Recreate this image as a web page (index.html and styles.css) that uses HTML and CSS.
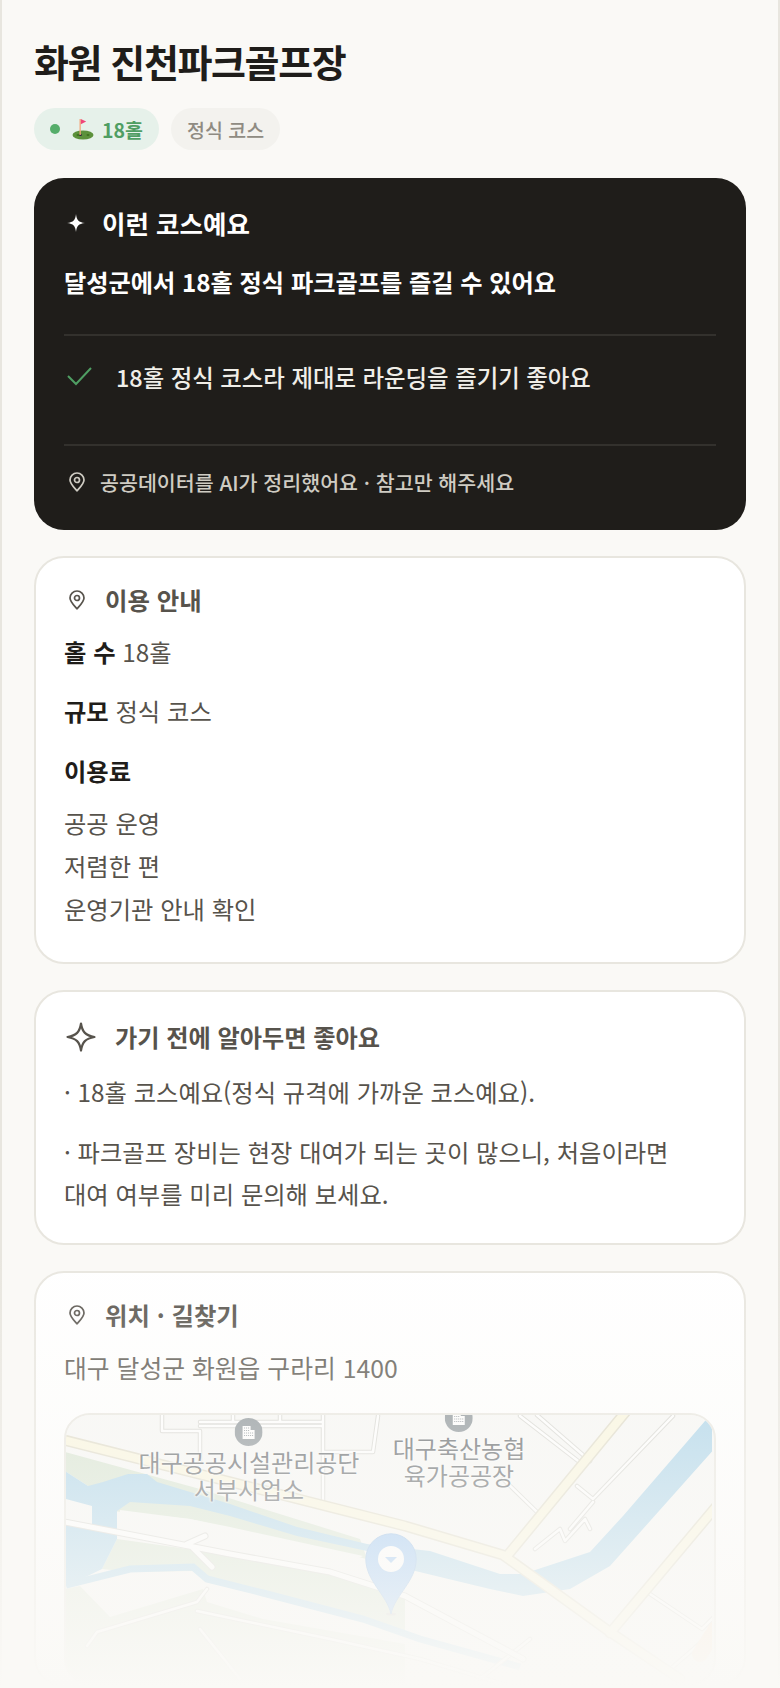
FILE: index.html
```html
<!DOCTYPE html>
<html lang="ko">
<head>
    <meta charset="UTF-8">
    <meta name="viewport" content="width=device-width, initial-scale=1.0">
    <title>화원 진천파크골프장</title>
    <link rel="stylesheet" href="styles.css">
</head>
<body>
    <div class="page">
        <h1 class="title">화원 진천파크골프장</h1>
        <div class="badges">
            <span class="badge badge-green"><i class="dot"></i><span class="emoji">
                <svg width="22" height="22" viewBox="0 0 22 22">
                    <ellipse cx="11" cy="17" rx="10.5" ry="4.500" fill="#5c913b"/>
                    <ellipse cx="6" cy="17" rx="1.500" ry="1" fill="#3e721d"/>
                    <ellipse cx="16" cy="17" rx="1.500" ry="1" fill="#3e721d"/>
                    <ellipse cx="8.500" cy="17" rx="1.400" ry="1" fill="#2c2440"/>
                    <rect x="7.500" y="1" width="1.300" height="16" fill="#f4a77a"/>
                    <path d="M8.800 1l5.400 2.600-5.400 2.600z" fill="#f0457a"/>
                </svg>
            </span>18홀</span>
            <span class="badge badge-gray">정식 코스</span>
        </div>

        <section class="hero">
            <div class="hero-head">
                <svg class="icon-spark" width="18" height="18" viewBox="0 0 18 18"><path d="M9 0c.6 6 2.500 8.200 9 9-6.500.8-8.400 3-9 9-.6-6-2.500-8.200-9-9 6.500-.8 8.400-3 9-9z" fill="#fff"/></svg>
                <span>이런 코스예요</span>
            </div>
            <p class="hero-lead">달성군에서 18홀 정식 파크골프를 즐길 수 있어요</p>
            <div class="hero-point">
                <svg width="28" height="22" viewBox="0 0 28 22"><path d="M4 10l8 8L27 2" fill="none" stroke="#4f9e63" stroke-width="2"/></svg>
                <span>18홀 정식 코스라 제대로 라운딩을 즐기기 좋아요</span>
            </div>
            <div class="hero-foot">
                <svg class="pin" width="18" height="20" viewBox="0 0 18 20"><path d="M9 18.800c-3.800-4.300-7-7.300-7-10.800a7 7 0 0 1 14 0c0 3.500-3.200 6.500-7 10.800z" fill="none" stroke="currentColor" stroke-width="1.700"/><circle cx="9" cy="8" r="2.500" fill="none" stroke="currentColor" stroke-width="1.700"/></svg>
                <span>공공데이터를 AI가 정리했어요 · 참고만 해주세요</span>
            </div>
        </section>

        <section class="card">
            <div class="card-head">
                <svg class="pin" width="18" height="20" viewBox="0 0 18 20"><path d="M9 18.800c-3.800-4.300-7-7.300-7-10.800a7 7 0 0 1 14 0c0 3.500-3.200 6.500-7 10.800z" fill="none" stroke="currentColor" stroke-width="1.700"/><circle cx="9" cy="8" r="2.500" fill="none" stroke="currentColor" stroke-width="1.700"/></svg>
                <span>이용 안내</span>
            </div>
            <p class="info-row"><b>홀 수</b> 18홀</p>
            <p class="info-row"><b>규모</b> 정식 코스</p>
            <p class="info-row"><b>이용료</b></p>
            <p class="info-lines">공공 운영<br>저렴한 편<br>운영기관 안내 확인</p>
        </section>

        <section class="card">
            <div class="card-head card-head-tips">
                <svg width="30" height="30" viewBox="0 0 30 30"><path d="M15 1.500c1.300 8.500 4.500 12 13.500 13.500-9 1.500-12.200 5-13.500 13.500-1.300-8.500-4.500-12-13.500-13.500 9-1.500 12.200-5 13.500-13.500z" fill="none" stroke="currentColor" stroke-width="2.200" stroke-linejoin="round"/></svg>
                <span>가기 전에 알아두면 좋아요</span>
            </div>
            <p class="tip">· 18홀 코스예요(정식 규격에 가까운 코스예요).</p>
            <p class="tip tip-next">· 파크골프 장비는 현장 대여가 되는 곳이 많으니, 처음이라면<br>대여 여부를 미리 문의해 보세요.</p>
        </section>

        <section class="card card-map">
            <div class="card-head">
                <svg class="pin" width="18" height="20" viewBox="0 0 18 20"><path d="M9 18.800c-3.800-4.300-7-7.300-7-10.800a7 7 0 0 1 14 0c0 3.500-3.200 6.500-7 10.800z" fill="none" stroke="currentColor" stroke-width="1.700"/><circle cx="9" cy="8" r="2.500" fill="none" stroke="currentColor" stroke-width="1.700"/></svg>
                <span>위치 · 길찾기</span>
            </div>
            <p class="address">대구 달성군 화원읍 구라리 1400</p>
            <div class="map">
                <svg class="map-art" width="646" height="270" viewBox="66 1416 646 270">
                    <rect x="66" y="1416" width="646" height="270" fill="#f7f7f5"/>
                    <!-- 녹지 -->
                    <path d="M65 1453L200 1490 360 1540 367 1560 190 1520 112 1512 112 1497 88 1487 65 1472z" fill="#d5e3cf"/>
                    <path d="M102 1570L117 1540 230 1556 330 1573 405 1597 405 1637 363 1623 263 1597 207 1583 193 1572 130 1573z" fill="#d5e3cf"/>
                    <path d="M65 1590L80 1587 110 1618 203 1590 207 1603 263 1620 405 1645 405 1690 65 1690z" fill="#dfe8d8"/>
                    <!-- 강 -->
                    <path d="M65 1472L88 1487 103 1483 128 1475 147 1475 157 1483 230 1505 297 1528 367 1545 430 1552 500 1575 523 1575 590 1553 623 1517 705 1422 716 1410 716 1448 610 1567 570 1590 523 1597 490 1590 407 1570 367 1552 297 1537 230 1517 190 1507 130 1503 117 1512 117 1540 102 1570 65 1588z" fill="#a7d2e9"/>
                    <path d="M66 1586L130 1570 193 1568 207 1580 263 1594 363 1620 420 1640 520 1668" fill="none" stroke="#a7d2e9" stroke-width="7"/>
                    <path d="M120 1511L190 1520 230 1528 363 1557 330 1573 230 1555 118 1533z" fill="#f7f7f5"/>
                    <path d="M66 1500L92 1507 92 1527 66 1523z" fill="#f7f7f5"/>
                    <g fill="none" stroke-linecap="round" stroke-linejoin="round">
                        <!-- 작은 길 -->
                        <path class="road-line" d="M162 1415V1432H200M200 1423H323M200 1427H322M233 1416V1423M280 1416V1423M200 1432V1463M323 1415V1502M325 1453H373L378 1417M520 1417L582 1465M537 1416L590 1462M577 1487L593 1500 673 1417M503 1480L537 1513M593 1503L570 1530M535 1550L560 1530 565 1542 585 1520 590 1530M650 1595L702 1630 715 1617M617 1640L667 1673 713 1633"/>
                        <path class="road-line-in" d="M162 1415V1432H200M200 1423H323M200 1427H322M233 1416V1423M280 1416V1423M200 1432V1463M323 1415V1502M325 1453H373L378 1417M520 1417L582 1465M537 1416L590 1462M577 1487L593 1500 673 1417M503 1480L537 1513M593 1503L570 1530M535 1550L560 1530 565 1542 585 1520 590 1530M650 1595L702 1630 715 1617M617 1640L667 1673 713 1633"/>
                        <path class="road-line" d="M207 1590L197 1603 97 1633 87 1647M197 1612L330 1640 420 1660 520 1690M200 1630L240 1680M530 1640L480 1680"/>
                        <path class="road-line-in" d="M207 1590L197 1603 97 1633 87 1647M197 1612L330 1640 420 1660 520 1690M200 1630L240 1680M530 1640L480 1680"/>
                        <!-- 중간 길 -->
                        <path class="road-mid" d="M65 1523L230 1555 330 1573 405 1597 523 1660M187 1545L205 1537M193 1549L212 1568"/>
                        <path class="road-mid-in" d="M65 1523L230 1555 330 1573 405 1597 523 1660M187 1545L205 1537M193 1549L212 1568"/>
                        <!-- 큰 길 -->
                        <path class="road" d="M60 1440L405 1527 503 1556 610 1633 680 1680M628 1410L507 1557M720 1503L610 1634"/>
                        <path class="road-in" d="M60 1440L405 1527 503 1556 610 1633 680 1680M628 1410L507 1557M720 1503L610 1634"/>
                        <path d="M700 1655L716 1630" stroke="#fbe2cb" stroke-width="16"/>
                    </g>
                </svg>
                <span class="poi poi-left">
                    <svg width="28" height="28" viewBox="0 0 28 28"><circle cx="14" cy="14" r="14" fill="#848d92"/><path d="M8 8h8v4h4v9H8z" fill="#fff"/><path d="M9.500 10h5M9.500 12.500h5M9.500 15h9M9.500 17.500h9" stroke="#848d92" stroke-width="1" stroke-dasharray="1 1"/></svg>
                    <span class="poi-name">대구공공시설관리공단<br>서부사업소</span>
                </span>
                <span class="poi poi-right">
                    <svg width="28" height="28" viewBox="0 0 28 28"><circle cx="14" cy="14" r="14" fill="#848d92"/><path d="M8 8h8v4h4v9H8z" fill="#fff"/><path d="M9.500 10h5M9.500 12.500h5M9.500 15h9M9.500 17.500h9" stroke="#848d92" stroke-width="1" stroke-dasharray="1 1"/></svg>
                    <span class="poi-name">대구축산농협<br>육가공공장</span>
                </span>
                <svg class="marker" width="52" height="84" viewBox="0 0 52 84">
                    <ellipse cx="26" cy="81" rx="5" ry="1.500" fill="#c9c9c4"/>
                    <path d="M26 81C22 62 .8 48 .8 26a25.200 25.200 0 0 1 50.400 0c0 22-21.200 36-25.200 55z" fill="#8fc0f4" stroke="#85b4e6"/>
                    <circle cx="26" cy="26" r="13" fill="#fff"/>
                    <path d="M20 24h12l-6 6z" fill="#8fc0f4"/>
                </svg>
            </div>
        </section>
    </div>
    <div class="fade"></div>
</body>
</html>
```

FILE: styles.css
```css
* {
    box-sizing: border-box;
}
html, body {
    margin: 0;
    height: 1688px;
    overflow: hidden;
}
body {
    font-family: "Noto Sans CJK KR", "Noto Sans", sans-serif;
    background-color: #faf9f6;
    color: #1f1d1a;
    border-left: 2px solid #e8e6df;
    border-right: 2px solid #e8e6df;
}
.page {
    padding: 35px 32px 0 32px;
}
.title {
    margin: 0;
    font-size: 38px;
    font-weight: 700;
    line-height: 52px;
    letter-spacing: -1.4px;
}
.badges {
    display: flex;
    gap: 12px;
    margin-top: 21px;
}
.badge {
    display: flex;
    align-items: center;
    height: 42px;
    padding: 0 16px 0 16px;
    border-radius: 21px;
    font-size: 19.5px;
    font-weight: 500;
}
.badge-green {
    background-color: #e6f1ea;
    color: #4f9e63;
    font-weight: 700;
}
.badge-gray {
    background-color: #f3f2ee;
    color: #8f8b82;
}
.dot {
    width: 10px;
    height: 10px;
    margin-right: 12px;
    border-radius: 50%;
    background-color: #55ad6a;
}
.emoji {
    display: flex;
    margin-right: 8px;
}
.hero {
    height: 352px;
    margin-top: 28px;
    padding: 27px 30px 0 30px;
    background-color: #1f1d1a;
    border-radius: 30px;
    color: #fff;
}
.hero-head {
    display: flex;
    align-items: center;
    gap: 17px;
    font-size: 25.5px;
    font-weight: 700;
    line-height: 36px;
}
.icon-spark {
    margin-left: 3px;
}
.hero-lead {
    margin: 23px 0 0 0;
    padding-bottom: 34px;
    border-bottom: 2px solid #33312d;
    font-size: 24.2px;
    font-weight: 700;
    line-height: 36px;
}
.hero-point {
    display: flex;
    align-items: center;
    gap: 24px;
    height: 110px;
    padding-bottom: 27px;
    border-bottom: 2px solid #33312d;
    color: #f0eee8;
    font-size: 23.4px;
    font-weight: 500;
}
.hero-foot {
    display: flex;
    align-items: center;
    gap: 14px;
    margin-top: 20px;
    color: #cfccc3;
    font-size: 20.6px;
    font-weight: 500;
    line-height: 32px;
}
.pin {
    margin-left: 4px;
}
.card {
    margin-top: 26px;
    padding: 27px 28px 28px 28px;
    background-color: #fff;
    border: 2px solid #e8e6df;
    border-radius: 30px;
}
.card-head {
    display: flex;
    align-items: center;
    gap: 19px;
    color: #57534c;
    font-size: 24.4px;
    font-weight: 700;
    line-height: 30px;
}
.card-head-tips {
    margin: 3px 0 0 2px;
    font-size: 24.2px;
}
.info-row {
    margin: 23px 0 0 0;
    color: #57534c;
    font-size: 24.3px;
    line-height: 36px;
}
.card-head + .info-row {
    margin-top: 19px;
}
.info-row b {
    color: #1f1d1a;
}
.info-row + .info-row + .info-row {
    margin-top: 24px;
}
.info-lines {
    margin: 12px 0 4px 0;
    color: #57534c;
    font-size: 24.3px;
    line-height: 43px;
}
.tip {
    margin: 19px 0 0 0;
    color: #57534c;
    font-size: 24.3px;
    line-height: 42px;
}
.tip-next {
    margin-top: 18px;
}
.card-map {
    height: 416px;
    padding-bottom: 0;
}
.address {
    margin: 19px 0 0 0;
    color: #57534c;
    font-size: 24.8px;
    line-height: 36px;
}
.map {
    position: relative;
    height: 272px;
    margin-top: 28px;
    overflow: hidden;
    border: 2px solid #e8e6df;
    border-radius: 26px;
    background-color: #f7f7f5;
}
.map-art {
    display: block;
}
.road-line {
    stroke: #d5d5d0;
    stroke-width: 4.5;
}
.road-line-in {
    stroke: #fff;
    stroke-width: 2.5;
}
.road-mid {
    stroke: #d5d5d0;
    stroke-width: 7;
}
.road-mid-in {
    stroke: #fff;
    stroke-width: 5;
}
.road {
    stroke: #ddd9c5;
    stroke-width: 11;
}
.road-in {
    stroke: #faf6dc;
    stroke-width: 8;
}
.poi {
    position: absolute;
    display: flex;
    flex-direction: column;
    align-items: center;
    transform: translateX(-50%);
}
.poi-left {
    left: 183px;
    top: 3px;
}
.poi-right {
    left: 393px;
    top: -11px;
}
.poi-name {
    margin-top: 2px;
    color: #555a5e;
    font-size: 24px;
    line-height: 27px;
    text-align: center;
    white-space: nowrap;
    text-shadow: 0 0 2px #fff, 0 0 2px #fff, 0 0 3px #fff;
}
.marker {
    position: absolute;
    left: 299px;
    top: 118px;
}
.fade {
    position: absolute;
    left: 0;
    right: 0;
    bottom: 0;
    height: 437px;
    background: linear-gradient(to bottom, rgba(250, 249, 246, 0), #faf9f6);
    pointer-events: none;
}
```
